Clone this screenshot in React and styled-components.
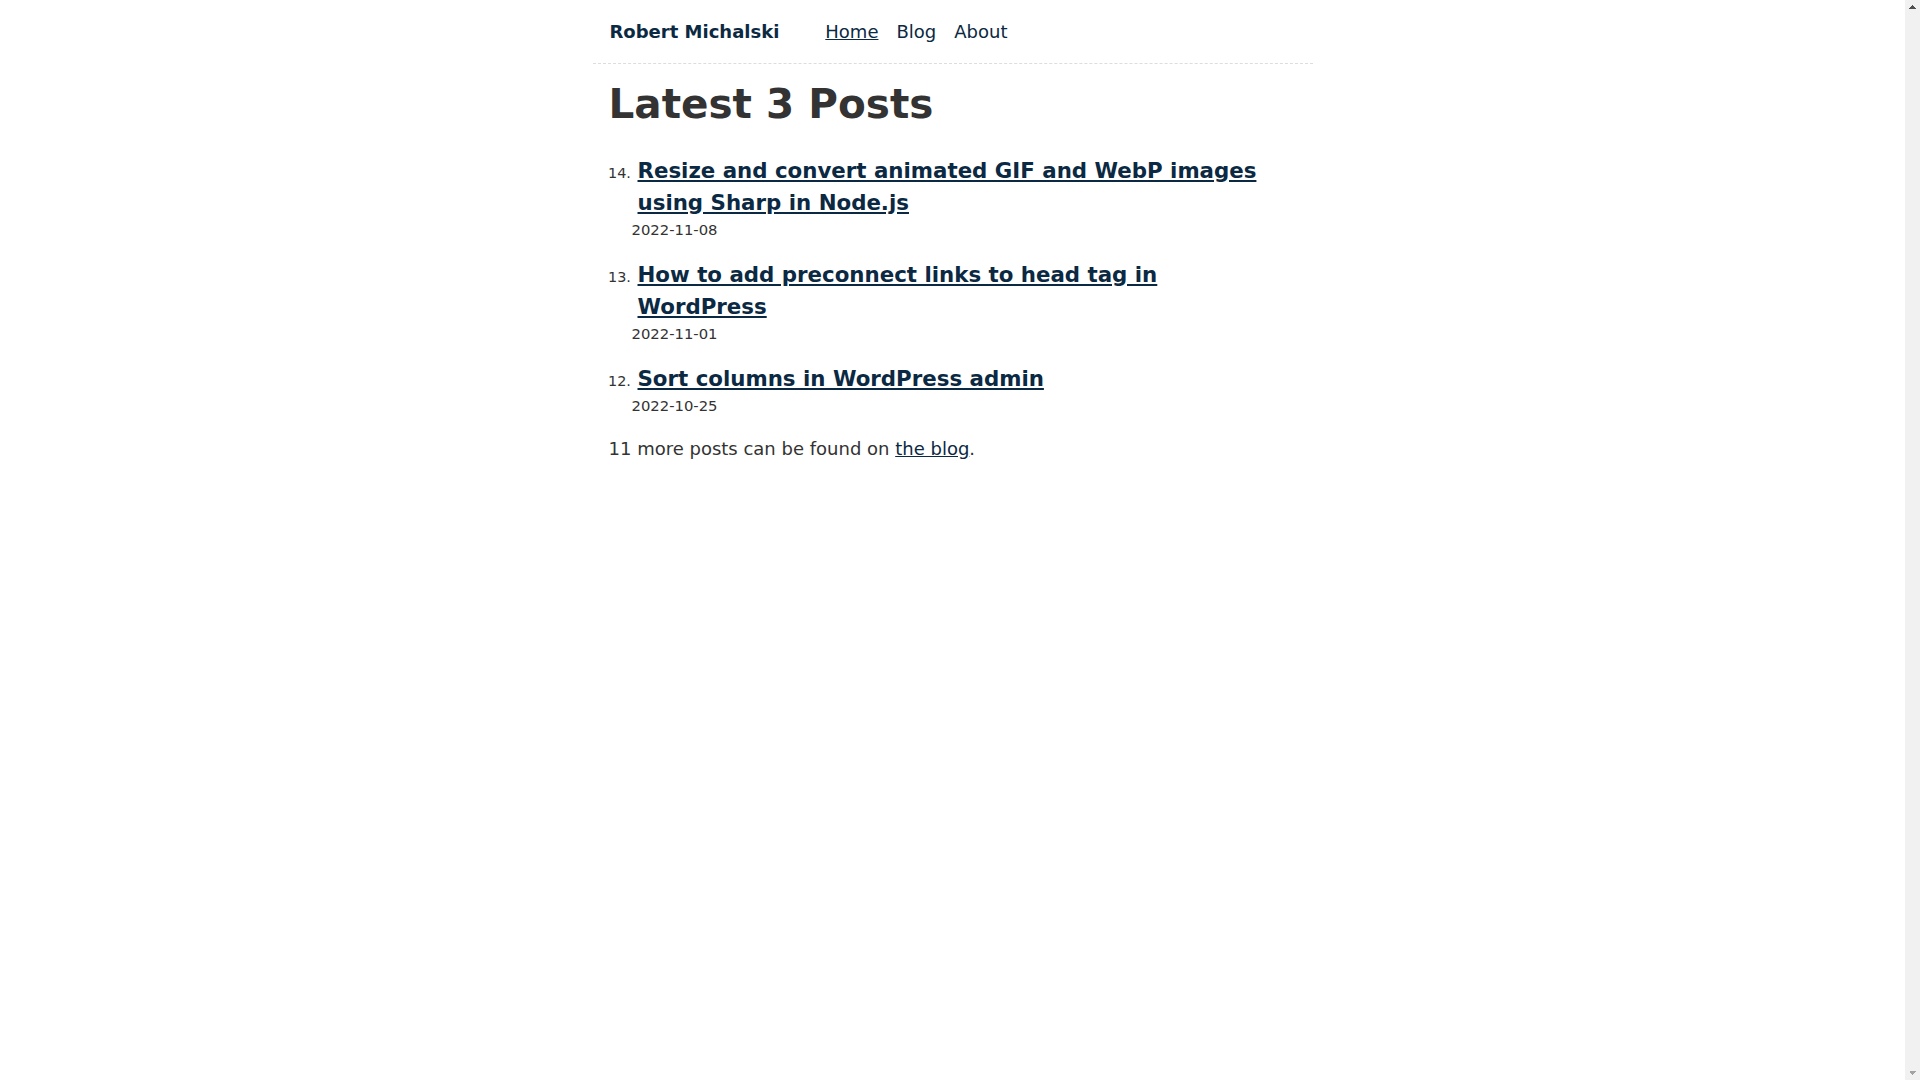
import React from "react";
import styled, { createGlobalStyle } from "styled-components";

const Global = createGlobalStyle`
  html {
    min-height: 100%;
    background-color: #fff;
    background-image:
      linear-gradient(to bottom right, transparent 50%, #505050 50%),
      linear-gradient(to bottom left, transparent 50%, #505050 50%),
      linear-gradient(to top right, transparent 50%, #a3a3a3 50%),
      linear-gradient(to top left, transparent 50%, #a3a3a3 50%),
      linear-gradient(to left, #f1f1f1 15px, #fff 15px);
    background-size: 4px 4px, 4px 4px, 4px 4px, 4px 4px, 100% 100%;
    background-position:
      right 7.5px top 5px,
      right 3.5px top 5px,
      right 7.5px bottom 5px,
      right 3.5px bottom 5px,
      0 0;
    background-repeat: no-repeat;
    background-attachment: fixed;
  }
  body {
    margin: 0 15px 0 0;
    color: #333;
    font-family: "DejaVu Sans", Verdana, sans-serif;
    font-size: 18px;
    line-height: 1.5;
  }
`;

const Page = styled.div`
  max-width: 720px;
  margin: 0 auto;
`;

const Header = styled.header`
  display: flex;
  align-items: baseline;
  padding: 18px 18px 18px 17px;
  line-height: 27px;
  border-bottom: 1px dashed #ddd;
`;

const SiteTitle = styled.a`
  font-weight: bold;
  color: #0b2942;
  text-decoration: none;
  margin-right: 46px;
`;

const Nav = styled.nav`
  display: flex;
  gap: 18px;
`;

const NavLink = styled.a`
  color: #0b2942;
  text-decoration: ${(p) => (p.$active ? "underline" : "none")};
`;

const Main = styled.main`
  padding: 0 18px 0 16px;
`;

const Title = styled.h1`
  margin: 16px 0 0;
  font-size: 40.5px;
  line-height: 1.2;
  color: #333;
`;

const PostList = styled.ol`
  margin: 26px 0 0;
  padding: 0 18px 0 27px;
`;

const Post = styled.li`
  font-size: 14.4px;
  margin-bottom: 18px;
  &::marker {
    font-size: 14.4px;
  }
`;

const PostTitle = styled.h2`
  margin: 0 0 0 2px;
  font-size: 21.33px;
  line-height: 32px;
  a {
    color: #0b2942;
  }
`;

const PostDate = styled.time`
  display: block;
  margin-left: -4px;
  font-size: 14.8px;
  line-height: 22px;
  color: #333;
`;

const More = styled.p`
  margin: 0;
  line-height: 27px;
  a {
    color: #0b2942;
  }
`;

const posts = [
  { n: 14, title: "Resize and convert animated GIF and WebP images using Sharp in Node.js", date: "2022-11-08" },
  { n: 13, title: "How to add preconnect links to head tag in WordPress", date: "2022-11-01" },
  { n: 12, title: "Sort columns in WordPress admin", date: "2022-10-25" },
];

export default function App() {
  return (
    <>
      <Global />
      <Page>
        <Header>
          <SiteTitle href="#">Robert Michalski</SiteTitle>
          <Nav>
            <NavLink href="#" $active>Home</NavLink>
            <NavLink href="#">Blog</NavLink>
            <NavLink href="#">About</NavLink>
          </Nav>
        </Header>
        <Main>
          <Title>Latest 3 Posts</Title>
          <PostList reversed start={14}>
            {posts.map((p) => (
              <Post key={p.n} value={p.n}>
                <PostTitle>
                  <a href="#">{p.title}</a>
                </PostTitle>
                <PostDate>{p.date}</PostDate>
              </Post>
            ))}
          </PostList>
          <More>
            11 more posts can be found on <a href="#">the blog</a>.
          </More>
        </Main>
      </Page>
    </>
  );
}
